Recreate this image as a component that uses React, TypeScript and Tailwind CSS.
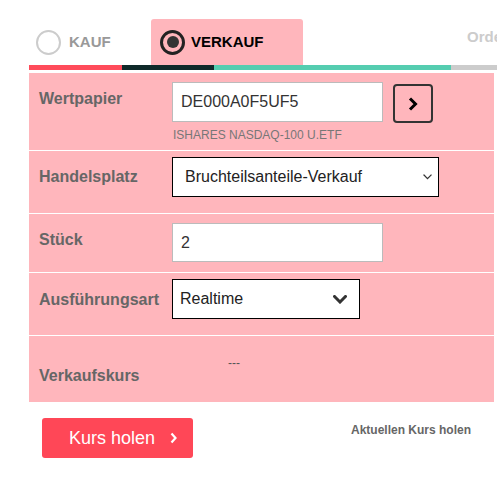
import { FC, ReactNode } from "react";

type RowProps = {
  label: string;
  height: string;
  labelTop: string;
  contentTop: string;
  last?: boolean;
  children: ReactNode;
};

const Row: FC<RowProps> = ({ label, height, labelTop, contentTop, last, children }) => (
  <div className={`flex ${height} ${last ? "" : "border-b border-white"}`}>
    <div className={`w-[143px] pl-[10px] ${labelTop} text-[16px] leading-[18px] font-bold text-[#666]`}>
      {label}
    </div>
    <div className={`flex-1 ${contentTop}`}>{children}</div>
  </div>
);

const Chevron: FC<{ className: string; stroke: number }> = ({ className, stroke }) => (
  <svg className={className} viewBox="0 0 14 9" fill="none" stroke="currentColor" strokeWidth={stroke}>
    <path d="M1.5 1.5 L7 7 L12.5 1.5" strokeLinecap="square" />
  </svg>
);

export default function App() {
  return (
    <div className="w-[497px] h-[478px] bg-white overflow-hidden font-['Liberation_Sans',Arial,sans-serif]">
      {/* tabs */}
      <div className="flex h-[46px] mt-[19px] pl-[29px] whitespace-nowrap">
        <div className="w-[122px] shrink-0 flex items-center pl-[7px] gap-[8px]">
          <span className="w-[25px] h-[25px] rounded-full border-2 border-[#ccc]" />
          <span className="text-[15px] font-bold text-[#999]">KAUF</span>
        </div>
        <div className="w-[152px] shrink-0 flex items-center pl-[9px] gap-[6px] bg-[#ffb6bc] rounded-t-[3px]">
          <span className="w-[25px] h-[25px] rounded-full border-[3px] border-[#222] flex items-center justify-center">
            <span className="w-[12px] h-[12px] rounded-full bg-[#333]" />
          </span>
          <span className="text-[15px] font-bold text-black">VERKAUF</span>
        </div>
        <div className="shrink-0 pl-[164px] pt-[9px] text-[15px] leading-[18px] font-bold text-[#ccc]">Orderbuch</div>
      </div>

      {/* progress bar */}
      <div className="flex h-[5px] ml-[29px]">
        <div className="w-[93px] bg-[#ff4b5a]" />
        <div className="w-[92px] bg-[#0f2a2a]" />
        <div className="w-[237px] bg-[#55cdb0]" />
        <div className="flex-1 bg-[#cccccc]" />
      </div>

      {/* form panel */}
      <div className="mt-[3px] ml-[29px] w-[465px] bg-[#ffb6bc]">
        <Row label="Wertpapier" height="h-[78px]" labelTop="pt-[17px]" contentTop="pt-[9px]">
          <div className="flex items-start gap-[10px]">
            <div className="w-[211px] h-[40px] bg-white border border-[#bbb] flex items-center pl-[8px] text-[16px] text-[#333]">
              DE000A0F5UF5
            </div>
            <div className="mt-[2px] w-[40px] h-[39px] border-2 border-[#333] rounded-[4px] flex items-center justify-center">
              <svg className="w-[10px] h-[14px] text-black" viewBox="0 0 10 14" fill="none" stroke="currentColor" strokeWidth="3">
                <path d="M2 1.5 L7.5 7 L2 12.5" />
              </svg>
            </div>
          </div>
          <div className="mt-[5px] pl-[1px] text-[12px] leading-[14px] text-[#777]">ISHARES NASDAQ-100 U.ETF</div>
        </Row>
        <Row label="Handelsplatz" height="h-[63px]" labelTop="pt-[17px]" contentTop="pt-[6px]">
          <div className="w-[267px] h-[40px] bg-white border border-black flex items-center justify-between pl-[12px] pr-[6px] text-[16px] text-[#222]">
            <span>Bruchteilsanteile-Verkauf</span>
            <Chevron className="w-[9px] h-[6px] text-[#333]" stroke={2} />
          </div>
        </Row>
        <Row label="Stück" height="h-[59px]" labelTop="pt-[17px]" contentTop="pt-[9px]">
          <div className="w-[211px] h-[39px] bg-white border border-[#bbb] flex items-center pl-[8px] text-[16px] text-[#333]">
            2
          </div>
        </Row>
        <Row label="Ausführungsart" height="h-[63px]" labelTop="pt-[18px]" contentTop="pt-[6px]">
          <div className="w-[188px] h-[40px] bg-white border border-black flex items-center justify-between pl-[7px] pr-[12px] text-[16px] text-[#222]">
            <span>Realtime</span>
            <Chevron className="w-[14px] h-[9px] text-[#333]" stroke={3} />
          </div>
        </Row>
        <Row label="Verkaufskurs" height="h-[66px]" labelTop="pt-[31px]" contentTop="pt-[20px]" last>
          <div className="pl-[56px] text-[12px] leading-[14px] text-[#555]">---</div>
        </Row>
      </div>

      {/* footer */}
      <div className="flex items-start mt-[16px] pl-[42px]">
        <div className="w-[151px] h-[40px] bg-[#ff4757] rounded-[3px] flex items-center pl-[27px] gap-[15px] text-white text-[18px]">
          <span>Kurs holen</span>
          <svg className="w-[7px] h-[12px]" viewBox="0 0 7 12" fill="none" stroke="currentColor" strokeWidth="2.2">
            <path d="M1.5 1.5 L5.5 6 L1.5 10.5" />
          </svg>
        </div>
        <div className="ml-[158px] mt-[5px] text-[12px] leading-[14px] font-bold text-[#666]">Aktuellen Kurs holen</div>
      </div>
    </div>
  );
}
